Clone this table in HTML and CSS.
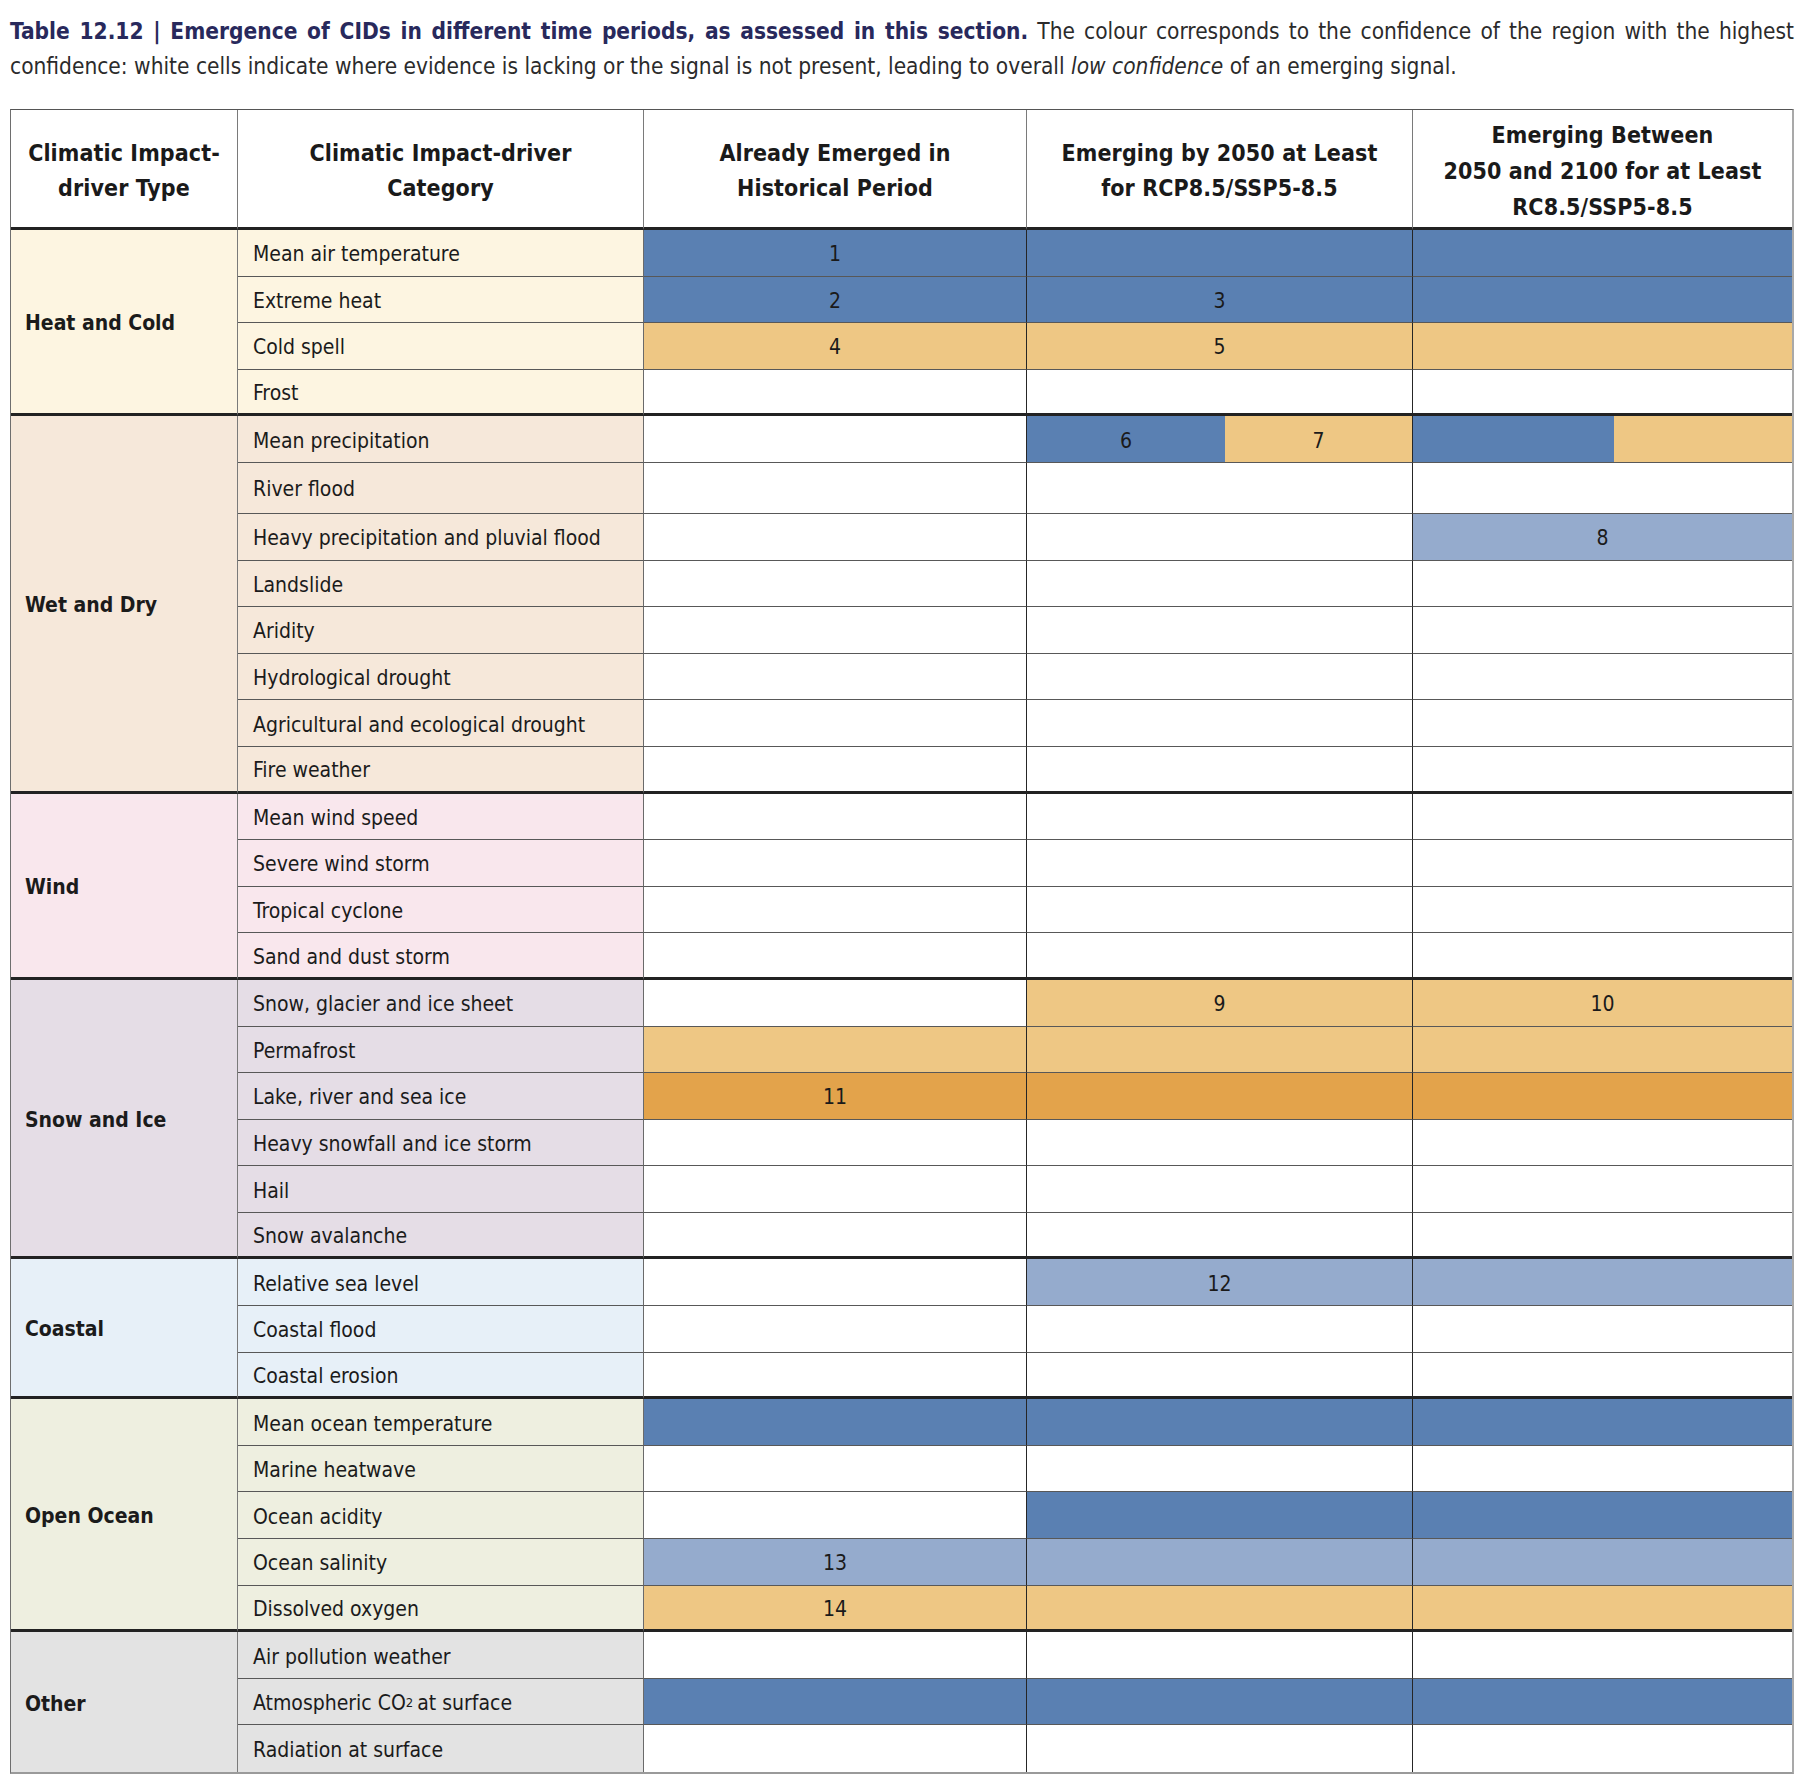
FILE: index.html
```html
<!DOCTYPE html>
<html lang="en">
<head>
<meta charset="utf-8">
<title>Table 12.12</title>
<link rel="stylesheet" href="styles.css">
</head>
<body>
<div class="page">
  <p class="caption"><b class="caption-title">Table 12.12 | Emergence of CIDs in different time periods, as assessed in this section.</b> The colour corresponds to the confidence of the region with the highest confidence: white cells indicate where evidence is lacking or the signal is not present, leading to overall <i>low confidence</i> of an emerging signal.</p>

  <div class="grid">
    <div class="row hd">
      <div>Climatic Impact-<br>driver Type</div>
      <div>Climatic Impact-driver<br>Category</div>
      <div>Already Emerged in<br>Historical Period</div>
      <div>Emerging by 2050 at Least<br>for RCP8.5/SSP5-8.5</div>
      <div class="three">Emerging Between<br>2050 and 2100 for at Least<br>RC8.5/SSP5-8.5</div>
    </div>

    <!-- Heat and Cold -->
    <div class="row heat">
      <div class="type span4">Heat and Cold</div>
      <div class="cat">Mean air temperature</div>
      <div class="d db">1</div><div class="d db"></div><div class="d db"></div>
    </div>
    <div class="row heat">
      <div class="cat">Extreme heat</div>
      <div class="d db">2</div><div class="d db">3</div><div class="d db"></div>
    </div>
    <div class="row heat">
      <div class="cat">Cold spell</div>
      <div class="d lo">4</div><div class="d lo">5</div><div class="d lo"></div>
    </div>
    <div class="row heat end">
      <div class="cat">Frost</div>
      <div class="d"></div><div class="d"></div><div class="d"></div>
    </div>

    <!-- Wet and Dry -->
    <div class="row wet">
      <div class="type span8">Wet and Dry</div>
      <div class="cat">Mean precipitation</div>
      <div class="d"></div>
      <div class="d split"><span class="part db a4">6</span><span class="part lo">7</span></div>
      <div class="d split"><span class="part db a5"></span><span class="part lo"></span></div>
    </div>
    <div class="row wet">
      <div class="cat">River flood</div>
      <div class="d"></div><div class="d"></div><div class="d"></div>
    </div>
    <div class="row wet">
      <div class="cat">Heavy precipitation and pluvial flood</div>
      <div class="d"></div><div class="d"></div><div class="d lb">8</div>
    </div>
    <div class="row wet">
      <div class="cat">Landslide</div>
      <div class="d"></div><div class="d"></div><div class="d"></div>
    </div>
    <div class="row wet">
      <div class="cat">Aridity</div>
      <div class="d"></div><div class="d"></div><div class="d"></div>
    </div>
    <div class="row wet">
      <div class="cat">Hydrological drought</div>
      <div class="d"></div><div class="d"></div><div class="d"></div>
    </div>
    <div class="row wet">
      <div class="cat">Agricultural and ecological drought</div>
      <div class="d"></div><div class="d"></div><div class="d"></div>
    </div>
    <div class="row wet end">
      <div class="cat">Fire weather</div>
      <div class="d"></div><div class="d"></div><div class="d"></div>
    </div>

    <!-- Wind -->
    <div class="row wind">
      <div class="type span4">Wind</div>
      <div class="cat">Mean wind speed</div>
      <div class="d"></div><div class="d"></div><div class="d"></div>
    </div>
    <div class="row wind">
      <div class="cat">Severe wind storm</div>
      <div class="d"></div><div class="d"></div><div class="d"></div>
    </div>
    <div class="row wind">
      <div class="cat">Tropical cyclone</div>
      <div class="d"></div><div class="d"></div><div class="d"></div>
    </div>
    <div class="row wind end">
      <div class="cat">Sand and dust storm</div>
      <div class="d"></div><div class="d"></div><div class="d"></div>
    </div>

    <!-- Snow and Ice -->
    <div class="row snow">
      <div class="type span6">Snow and Ice</div>
      <div class="cat">Snow, glacier and ice sheet</div>
      <div class="d"></div><div class="d lo">9</div><div class="d lo">10</div>
    </div>
    <div class="row snow">
      <div class="cat">Permafrost</div>
      <div class="d lo"></div><div class="d lo"></div><div class="d lo"></div>
    </div>
    <div class="row snow">
      <div class="cat">Lake, river and sea ice</div>
      <div class="d do">11</div><div class="d do"></div><div class="d do"></div>
    </div>
    <div class="row snow">
      <div class="cat">Heavy snowfall and ice storm</div>
      <div class="d"></div><div class="d"></div><div class="d"></div>
    </div>
    <div class="row snow">
      <div class="cat">Hail</div>
      <div class="d"></div><div class="d"></div><div class="d"></div>
    </div>
    <div class="row snow end">
      <div class="cat">Snow avalanche</div>
      <div class="d"></div><div class="d"></div><div class="d"></div>
    </div>

    <!-- Coastal -->
    <div class="row coast">
      <div class="type span3">Coastal</div>
      <div class="cat">Relative sea level</div>
      <div class="d"></div><div class="d lb">12</div><div class="d lb"></div>
    </div>
    <div class="row coast">
      <div class="cat">Coastal flood</div>
      <div class="d"></div><div class="d"></div><div class="d"></div>
    </div>
    <div class="row coast end">
      <div class="cat">Coastal erosion</div>
      <div class="d"></div><div class="d"></div><div class="d"></div>
    </div>

    <!-- Open Ocean -->
    <div class="row ocean">
      <div class="type span5">Open Ocean</div>
      <div class="cat">Mean ocean temperature</div>
      <div class="d db"></div><div class="d db"></div><div class="d db"></div>
    </div>
    <div class="row ocean">
      <div class="cat">Marine heatwave</div>
      <div class="d"></div><div class="d"></div><div class="d"></div>
    </div>
    <div class="row ocean">
      <div class="cat">Ocean acidity</div>
      <div class="d"></div><div class="d db"></div><div class="d db"></div>
    </div>
    <div class="row ocean">
      <div class="cat">Ocean salinity</div>
      <div class="d lb">13</div><div class="d lb"></div><div class="d lb"></div>
    </div>
    <div class="row ocean end">
      <div class="cat">Dissolved oxygen</div>
      <div class="d lo">14</div><div class="d lo"></div><div class="d lo"></div>
    </div>

    <!-- Other -->
    <div class="row other">
      <div class="type span3 last">Other</div>
      <div class="cat">Air pollution weather</div>
      <div class="d"></div><div class="d"></div><div class="d"></div>
    </div>
    <div class="row other">
      <div class="cat">Atmospheric CO<sub>2</sub> at surface</div>
      <div class="d db"></div><div class="d db"></div><div class="d db"></div>
    </div>
    <div class="row other last">
      <div class="cat">Radiation at surface</div>
      <div class="d"></div><div class="d"></div><div class="d"></div>
    </div>
  </div>
</div>
</body>
</html>
```

FILE: styles.css
```css
html, body {
  margin: 0;
  padding: 0;
  background: #ffffff;
}

body {
  font-family: "DejaVu Sans Condensed", "DejaVu Sans", "Liberation Sans", sans-serif;
  color: #1b1b1b;
}

.page {
  padding: 14px 0 0 10px;
  width: 1784px;
}

.caption {
  margin: 0;
  font-size: 22.5px;
  line-height: 34.5px;
  letter-spacing: 0;
  text-align: justify;
  color: #2b2b2b;
}

.caption-title {
  color: #28295c;
  font-weight: 700;
}

.grid {
  margin-top: 26px;
  display: grid;
  box-sizing: border-box;
  width: 1784px;
  grid-template-columns: 227px 406px 383px 386px 379px;
  grid-template-rows: 120px repeat(5, 46.6px) 51px repeat(27, 46.6px);
  border-top: 1px solid #555555;
  border-left: 1px solid #6e6e6e;
  border-right: 2px solid #a9a9a9;
  border-bottom: 2px solid #9a9a9a;
}

.row {
  display: contents;
}

.row > div {
  box-sizing: border-box;
  display: flex;
  align-items: center;
  min-width: 0;
  padding-top: 3px;
  border-bottom: 1px solid #585858;
  border-right: 1px solid #262626;
  font-size: 21px;
  letter-spacing: 0;
}

.row > div:last-child {
  border-right: none;
}

.row.end > div,
.row > .type {
  border-bottom: 3px solid #222222;
}

.row.last > div,
.row > .type.last {
  border-bottom: none;
}

/* header */
.row.hd > div {
  justify-content: center;
  text-align: center;
  font-weight: 700;
  font-size: 23px;
  line-height: 35px;
  letter-spacing: 0.1px;
  color: #1a1a1a;
  border-bottom: 3px solid #222222;
  border-right: 1px solid #7a7a7a;
  background: #ffffff;
  padding-top: 4px;
}

.row.hd > div.three {
  line-height: 36px;
}

.row.hd > div:last-child {
  border-right: none;
}

/* type column */
.type {
  font-weight: 700;
  padding-left: 14px;
  border-right-color: #7a7a7a !important;
}

.span3 { grid-row: span 3; }
.span4 { grid-row: span 4; }
.span5 { grid-row: span 5; }
.span6 { grid-row: span 6; }
.span8 { grid-row: span 8; }

/* category column */
.cat {
  padding-left: 15px;
  white-space: nowrap;
  border-right-color: #6a6a6a !important;
}

.cat sub {
  font-size: 13px;
  vertical-align: -3px;
  line-height: 0;
  margin-right: 4px;
}

/* group colours */
.heat > .type, .heat > .cat { background: #fdf5e1; }
.wet > .type, .wet > .cat { background: #f6e8da; }
.wind > .type, .wind > .cat { background: #f9e7ed; }
.snow > .type, .snow > .cat { background: #e5dde6; }
.coast > .type, .coast > .cat { background: #e7f0f8; }
.ocean > .type, .ocean > .cat { background: #eeefe0; }
.other > .type, .other > .cat { background: #e3e3e3; }

/* data cells */
.d {
  justify-content: center;
  background: #ffffff;
  color: #1a1a1a;
}

.row > .split {
  padding: 0;
  align-items: stretch;
  justify-content: flex-start;
}

.part {
  display: flex;
  align-items: center;
  justify-content: center;
  flex: 1 1 auto;
  padding-top: 3px;
}

.part.a4 {
  flex: 0 0 198px;
}

.part.a5 {
  flex: 0 0 201px;
}

.db { background: #5a80b2; }
.lb { background: #95abcd; }
.lo { background: #eec784; }
.do { background: #e3a34b; }
```
